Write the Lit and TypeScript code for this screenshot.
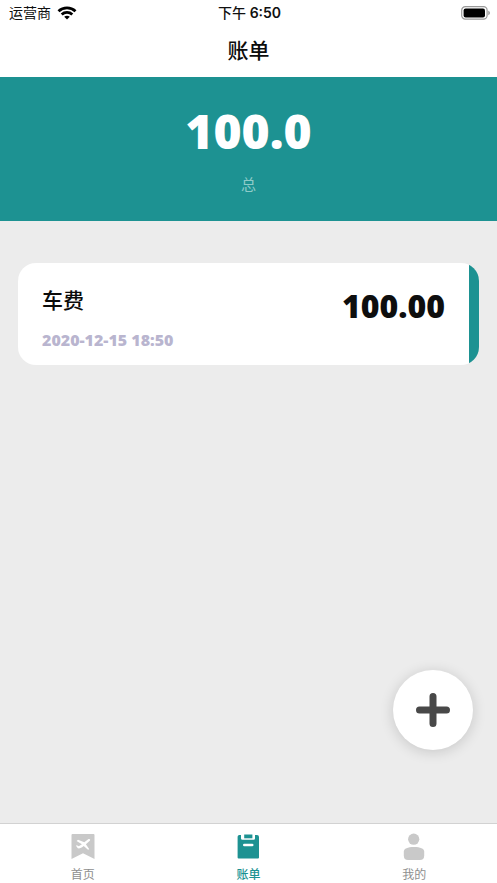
import { LitElement, html, css, svg } from "lit";
import { customElement, property, state } from "lit/decorators.js";
import { classMap } from "lit/directives/class-map.js";

interface Bill {
  name: string;
  time: string;
  amount: string;
}

@customElement("status-bar")
class StatusBar extends LitElement {
  static styles = css`
    :host {
      display: grid;
      grid-template-columns: 1fr auto 1fr;
      align-items: center;
      height: 26px;
      padding: 0 7px 0 9px;
      font-size: 14px;
      line-height: 20px;
      color: #111;
    }
    .carrier {
      display: flex;
      align-items: center;
      gap: 6px;
    }
    .clock {
      font-weight: 500;
      font-family: Inter, "Noto Sans CJK SC", sans-serif;
    }
    .digits {
      font-weight: 600;
    }
    .battery {
      justify-self: end;
    }
    svg {
      display: block;
    }
  `;

  render() {
    return html`
      <div class="carrier">
        <span>运营商</span>
        <svg width="20" height="14" viewBox="0 0 20 14" aria-label="Wi-Fi">
          <g fill="none" stroke="#000" stroke-width="2.8">
            <path d="M1.5 5.2C6.3 .7 13.7 .7 18.5 5.2" />
            <path d="M4.7 8.5C7.7 5.7 12.3 5.7 15.3 8.5" />
          </g>
          <path d="M7.2 10.7C8.8 9.3 11.2 9.3 12.8 10.7L10 13.5Z" />
        </svg>
      </div>
      <div class="clock">下午 <span class="digits">6:50</span></div>
      <svg class="battery" width="29" height="14" viewBox="0 0 29 14" aria-label="电量">
        <rect x=".7" y=".7" width="25.4" height="12.4" rx="3.6" fill="none" stroke="#999" stroke-width="1.2" />
        <rect x="2.6" y="2.6" width="21.4" height="8.8" rx="2" />
        <path d="M27.4 4.8C29.2 5.5 29.2 8.5 27.4 9.2Z" fill="#888" />
      </svg>
    `;
  }
}

@customElement("bill-card")
class BillCard extends LitElement {
  @property({ attribute: false }) bill!: Bill;

  static styles = css`
    :host {
      display: flex;
      justify-content: space-between;
      align-items: flex-start;
      box-sizing: border-box;
      min-height: 102px;
      padding: 23px 24px 12px;
      border-radius: 18px;
      background: linear-gradient(to left, #1d9292 10px, #fff 10px);
    }
    .name {
      margin: 0;
      font-size: 21px;
      line-height: 30px;
      font-weight: 500;
      color: #0c0c0c;
    }
    .time {
      display: block;
      margin-top: 14px;
      font: 800 16px/20px "Open Sans", sans-serif;
      color: #b9b5cf;
    }
    .amount {
      padding-right: 10px;
      font: 800 32px/40px "Open Sans", sans-serif;
      color: #0e0e0e;
    }
  `;

  render() {
    return html`
      <div>
        <h2 class="name">${this.bill.name}</h2>
        <time class="time">${this.bill.time}</time>
      </div>
      <span class="amount">${this.bill.amount}</span>
    `;
  }
}

const tabs = [
  {
    label: "首页",
    icon: svg`
      <path fill="currentColor" d="M3.5 0H24.5a1 1 0 0 1 1 1V25L14 19.2 2.5 25V1a1 1 0 0 1 1-1Z" />
      <path fill="#fff" d="M19.2 5.2C20.6 4.4 21.8 5.4 20.8 6.8L16.9 10.3 20.3 15.2 19 15.8 14.7 12.1C12.8 13.7 10.2 14.9 8.8 14.3L7 11.8 7.8 11.2 9.8 12.2 12.9 10.3 7.6 7 9 5.8 15.3 8.3Z" />`,
  },
  {
    label: "账单",
    icon: svg`
      <path fill="currentColor" d="M5 1H7V4.400a1.400 1.400 0 0 0 1.400 1.400H19.600A1.400 1.400 0 0 0 21 4.400V1H23a2 2 0 0 1 2 2V23.400a1 1 0 0 1-1 1H4.600a1 1 0 0 1-1-1V3A2 2 0 0 1 5 1Z" />
      <path fill="currentColor" d="M10.200 .5H18.400V4.300H10.200Z" />
      <path fill="none" stroke="#fff" stroke-width="2.6" stroke-linecap="round" d="M10.300 11H18.200" />`,
  },
  {
    label: "我的",
    icon: svg`
      <circle cx="13.7" cy="5.2" r="5.6" fill="currentColor" />
      <path fill="currentColor" d="M14 13C20.5 13 24 14.800 24.200 17.400V21.500Q24.200 26 20 26H8Q3.800 26 3.800 21.500V17.400C4 14.800 7.500 13 14 13Z" />`,
  },
];

@customElement("tab-bar")
class TabBar extends LitElement {
  @state() private active = 1;

  static styles = css`
    :host {
      display: block;
      border-top: 1px solid #d2d2d2;
      background: #fff;
    }
    nav {
      display: grid;
      grid-template-columns: repeat(3, 1fr);
    }
    .tab {
      display: flex;
      flex-direction: column;
      align-items: center;
      gap: 6px;
      height: 59px;
      padding: 10px 0 0;
      border: 0;
      background: none;
      color: #8e8e8e;
      font: 12px/18px "Liberation Sans", "Noto Sans CJK SC", sans-serif;
      cursor: pointer;
    }
    .icon {
      display: block;
      flex: none;
      overflow: visible;
      color: #c9c9c9;
    }
    .active,
    .active .icon {
      color: #1d9292;
    }
    .active {
      font-weight: 500;
    }
  `;

  render() {
    return html`<nav>
      ${tabs.map(
        (tab, i) => html`<button
          class=${classMap({ tab: true, active: i === this.active })}
          @click=${() => (this.active = i)}
        >
          <svg class="icon" width="28" height="26" viewBox="0 0 28 26" aria-hidden="true">${tab.icon}</svg>
          <span>${tab.label}</span>
        </button>`
      )}
    </nav>`;
  }
}

@customElement("app-root")
class AppRoot extends LitElement {
  @state() private bills: Bill[] = [{ name: "车费", time: "2020-12-15 18:50", amount: "100.00" }];

  static styles = css`
    :host {
      display: flex;
      flex-direction: column;
      min-height: 100vh;
      background: #ececec;
      font-family: "Liberation Sans", "Noto Sans CJK SC", sans-serif;
    }
    header {
      background: #fff;
    }
    .title {
      margin: 0;
      padding: 9px 0 10px;
      font-size: 21px;
      line-height: 32px;
      font-weight: 500;
      text-align: center;
      color: #0c0c0c;
    }
    .summary {
      display: flex;
      flex-direction: column;
      align-items: center;
      gap: 14px;
      padding: 24px 0 26px;
      background: #1d9292;
    }
    .total {
      font: 800 48px/60px "Open Sans", sans-serif;
      color: #fff;
    }
    .caption {
      font-size: 15px;
      line-height: 20px;
      color: #8ecbc9;
    }
    .list {
      flex: 1;
      margin: 0;
      padding: 42px 18px;
      list-style: none;
    }
    .add {
      position: fixed;
      right: 24px;
      bottom: 133px;
      display: grid;
      place-items: center;
      width: 80px;
      height: 80px;
      padding: 0;
      border: 0;
      border-radius: 50%;
      background: #fff;
      box-shadow: 0 2px 14px rgba(0, 0, 0, 0.16);
      cursor: pointer;
    }
  `;

  render() {
    return html`
      <header>
        <status-bar></status-bar>
        <h1 class="title">账单</h1>
      </header>
      <section class="summary">
        <span class="total">100.0</span>
        <span class="caption">总</span>
      </section>
      <ul class="list">
        ${this.bills.map((bill) => html`<li><bill-card .bill=${bill}></bill-card></li>`)}
      </ul>
      <button class="add" aria-label="添加">
        <svg width="34" height="34" viewBox="0 0 34 34">
          <path d="M17 3.5V30.5M3.5 17H30.5" stroke="#484848" stroke-width="7" stroke-linecap="round" />
        </svg>
      </button>
      <tab-bar></tab-bar>
    `;
  }
}
